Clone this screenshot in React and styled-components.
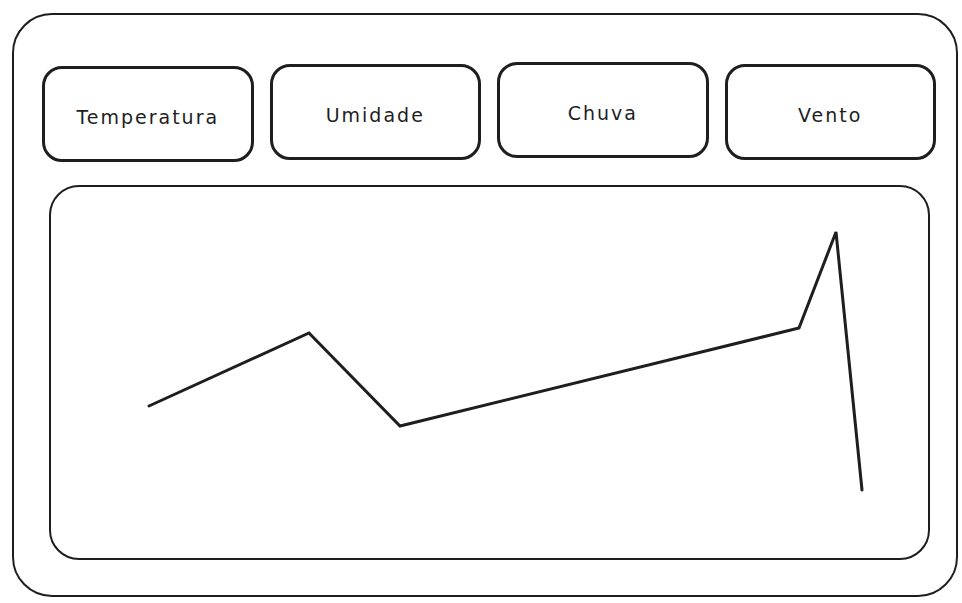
import styled, { createGlobalStyle } from "styled-components";

const INK = "#1e1e1e";
const METRICS = ["Temperatura", "Umidade", "Chuva", "Vento"];
// points in chart panel coordinates
const POINTS = [
  [100, 221],
  [260, 148],
  [351, 241],
  [750, 143],
  [787, 47],
  [813, 305],
];

export default function App() {
  return (
    <>
      <GlobalStyle />
      <Frame>
        <Cards>
          {METRICS.map((label, i) => (
            <Card key={label} $shift={[2, 0, -2, 0][i]}>
              {label}
            </Card>
          ))}
        </Cards>
        <ChartPanel>
          <svg width="881" height="373" viewBox="0 0 881 373">
            <polyline
              points={POINTS.map((p) => p.join(",")).join(" ")}
              fill="none"
              stroke={INK}
              strokeWidth="3"
              strokeLinejoin="miter"
              strokeLinecap="round"
            />
          </svg>
        </ChartPanel>
      </Frame>
    </>
  );
}

// STYLES
const GlobalStyle = createGlobalStyle`
  * { box-sizing: border-box; }
  body {
    margin: 0;
    background: #ffffff;
    font-family: "DejaVu Sans", "Liberation Sans", sans-serif;
    color: ${INK};
  }
`;

// OUTER FRAME
const Frame = styled.div`
  margin: 13px 4px 6px 12px;
  height: 584px;
  border: 2.5px solid ${INK};
  border-radius: 40px;
  padding: 49px 20px 35px 28px;
  display: flex;
  flex-direction: column;
  gap: 25px;
`;

// METRIC CARDS
const Cards = styled.div`
  display: grid;
  grid-template-columns: repeat(4, 1fr);
  gap: 16px;
  height: 96px;
`;

const Card = styled.div`
  display: flex;
  align-items: center;
  justify-content: center;
  border: 3px solid ${INK};
  border-radius: 20px;
  font-size: 19px;
  letter-spacing: 2px;
  transform: translateY(${(p) => p.$shift}px);
  padding-top: 6px;
`;

// CHART
const ChartPanel = styled.div`
  flex: 1;
  margin: 0 6px 0 7px;
  border: 2.5px solid ${INK};
  border-radius: 30px;
  overflow: hidden;
  svg {
    display: block;
    margin: -2px;
  }
`;
